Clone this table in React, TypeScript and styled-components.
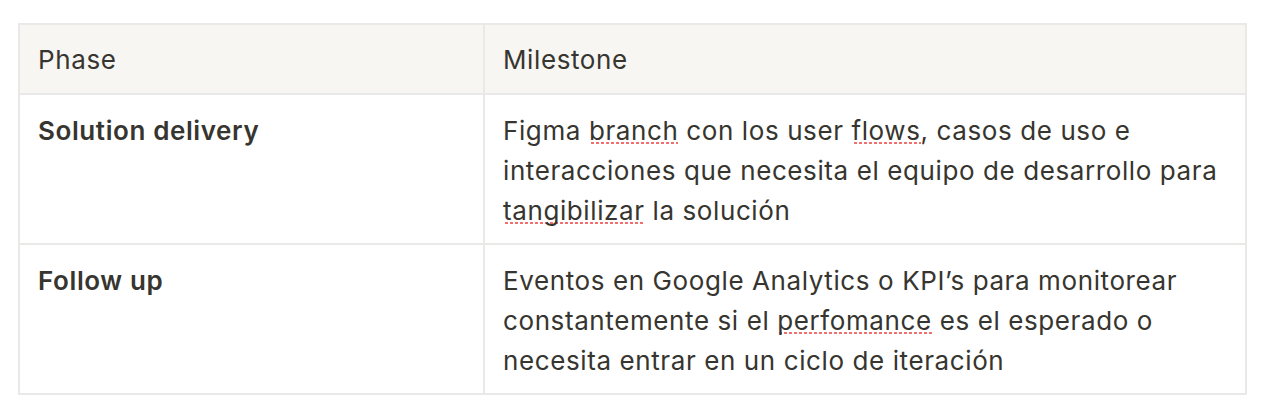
import * as React from "react";
import styled, { createGlobalStyle } from "styled-components";

const GlobalStyle = createGlobalStyle`
	body {
		margin: 0;
		background: #ffffff;
		font-family: Inter, "Noto Sans", sans-serif;
		color: #37352f;
	}
`;

const Page = styled.main`
	padding: 23px 32px 24px 18px;
`;

const Table = styled.table`
	width: 1227px;
	border-collapse: collapse;
	table-layout: fixed;
	font-size: 26px;
	letter-spacing: 0.6px;
	line-height: 40px;
	color: #37352f;
`;

const Cell = styled.td<{ $head?: boolean; $bold?: boolean }>`
	border: 2px solid #e9e9e7;
	padding: ${(p) => (p.$head ? "15px 18px 13px" : "16px 18px 12px")};
	vertical-align: top;
	text-align: left;
	font-weight: ${(p) => (p.$bold ? 600 : 400)};
	background: ${(p) => (p.$head ? "#f7f6f3" : "#ffffff")};
	height: ${(p) => (p.$head ? "40px" : "auto")};
`;

const Misspelled = styled.span`
	background-image: radial-gradient(circle, #f26b6b 1.1px, transparent 1.5px);
	background-size: 5px 4px;
	background-repeat: repeat-x;
	background-position: 1px calc(100% - 3px);
	padding-bottom: 2px;
`;

export default function App() {
	return (
		<>
			<GlobalStyle />
			<Page>
				<Table>
					<colgroup>
						<col style={{ width: 465 }} />
						<col style={{ width: 762 }} />
					</colgroup>
					<thead>
						<tr>
							<Cell as="th" $head>
								Phase
							</Cell>
							<Cell as="th" $head>
								Milestone
							</Cell>
						</tr>
					</thead>
					<tbody>
						<tr>
							<Cell $bold>Solution delivery</Cell>
							<Cell>
								Figma <Misspelled>branch</Misspelled> con los user <Misspelled>flows</Misspelled>, casos de uso e
								interacciones que necesita el equipo de desarrollo para{" "}
								<Misspelled>tangibilizar</Misspelled> la solución
							</Cell>
						</tr>
						<tr>
							<Cell $bold>Follow up</Cell>
							<Cell>
								Eventos en Google Analytics o KPI’s para monitorear constantemente si el{" "}
								<Misspelled>perfomance</Misspelled> es el esperado o necesita entrar en un ciclo de
								iteración
							</Cell>
						</tr>
					</tbody>
				</Table>
			</Page>
		</>
	);
}
